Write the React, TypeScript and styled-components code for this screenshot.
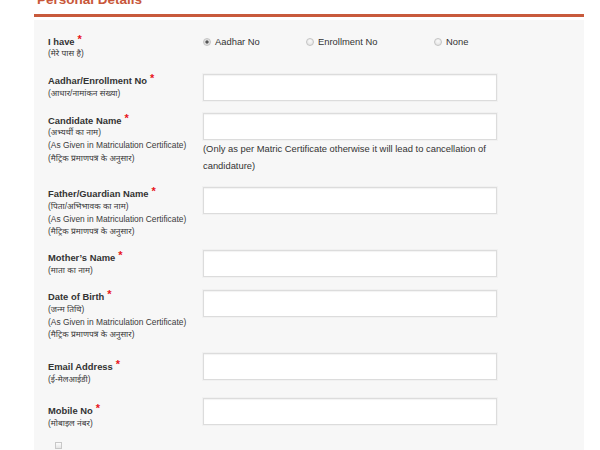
import React from "react";
import styled, { createGlobalStyle } from "styled-components";

const GlobalStyle = createGlobalStyle`
  html, body { margin: 0; padding: 0; background: #ffffff; }
  body {
    font-family: "Liberation Sans", Arial, "Noto Sans Devanagari", "Noto Sans", sans-serif;
    color: #333333;
    overflow: hidden;
  }
`;

const Page = styled.div`
  width: 550px;
  margin-left: 34px;
  height: 450px;
  overflow: hidden;
`;

const SectionTitle = styled.h3`
  margin: -8px 0 0 0;
  padding: 0 0 6px 3px;
  font-size: 13.5px;
  line-height: 16px;
  font-weight: bold;
  color: #c8573a;
  border-bottom: 3px solid #c85a3c;
`;

const Panel = styled.div`
  margin-top: 3px;
  background: #f7f7f7;
  padding: 14px 0 20px 14px;
  display: flex;
  flex-direction: column;
  gap: 12.4px;
  min-height: 440px;
`;

const Row = styled.div<{ $minHeight?: number }>`
  display: grid;
  grid-template-columns: 155px 1fr;
  align-items: start;
  min-height: ${(p) => (p.$minHeight ? `${p.$minHeight}px` : "0")};
`;

const LabelBlock = styled.div<{ $offset?: number }>`
  padding-top: ${(p) => p.$offset ?? 0.5}px;
  display: flex;
  flex-direction: column;
`;

const LabelMain = styled.span`
  display: block;
  height: 12.7px;
  font-size: 9.4px;
  font-weight: bold;
  line-height: 12.7px;
  color: #333333;
  white-space: nowrap;
`;

const Required = styled.span`
  color: #e8141b;
  font-size: 11px;
  font-weight: bold;
  position: relative;
  top: -2px;
  margin-left: 3px;
`;

const SubLabel = styled.span`
  display: block;
  height: 12.7px;
  font-size: 8.4px;
  line-height: 12.7px;
  color: #3a3a3a;
  white-space: nowrap;
`;

const Field = styled.div`
  display: flex;
  flex-direction: column;
`;

const TextInput = styled.input`
  width: 294px;
  height: 27px;
  box-sizing: border-box;
  margin: 0;
  border: 1px solid #dcdcdc;
  background: #ffffff;
  box-shadow: inset 0 1px 1px rgba(0, 0, 0, 0.05), 0 0 0 1px #f1f1f1;
  font-family: inherit;
  font-size: 9.4px;
  outline: none;
`;

const Note = styled.p`
  margin: 0 0 0 0;
  width: 294px;
  font-size: 9.4px;
  line-height: 17px;
  color: #333333;
`;

const RadioGroup = styled.div`
  display: flex;
  align-items: center;
  padding-top: 0.5px;
  height: 14px;
`;

const RadioOption = styled.label<{ $width?: number }>`
  display: flex;
  align-items: center;
  width: ${(p) => (p.$width ? `${p.$width}px` : "auto")};
  font-size: 9.4px;
  color: #333333;
`;

const Radio = styled.input`
  appearance: none;
  -webkit-appearance: none;
  width: 8px;
  height: 8px;
  margin: 0 4px 0 0;
  border-radius: 50%;
  border: 1px solid #c4c4c4;
  background: radial-gradient(circle at 50% 35%, #fafafa 0%, #dedede 100%);
  box-sizing: border-box;
  &:checked {
    background: radial-gradient(circle, #555 0%, #555 30%, #dcdcdc 45%, #e9e9e9 100%);
  }
`;

const CheckRow = styled.div`
  padding-left: 7px;
`;

const Check = styled.input`
  appearance: none;
  -webkit-appearance: none;
  width: 7px;
  height: 7px;
  margin: 0;
  border: 1px solid #c8c8c8;
  background: linear-gradient(#fcfcfc, #e6e6e6);
  box-sizing: border-box;
  display: block;
`;

type Entry = {
  label: string;
  subs: string[];
  offset?: number;
  note?: string;
};

const entries: Entry[] = [
  { label: "Aadhar/Enrollment No", subs: ["(आधार/नामांकन संख्या)"] },
  {
    label: "Candidate Name",
    subs: ["(अभ्यर्थी का नाम)", "(As Given in Matriculation Certificate)", "(मैट्रिक प्रमाणपत्र के अनुसार)"],
    note: "(Only as per Matric Certificate otherwise it will lead to cancellation of candidature)",
  },
  {
    label: "Father/Guardian Name",
    subs: ["(पिता/अभिभावक का नाम)", "(As Given in Matriculation Certificate)", "(मैट्रिक प्रमाणपत्र के अनुसार)"],
  },
  { label: "Mother’s Name", subs: ["(माता का नाम)"] },
  {
    label: "Date of Birth",
    subs: ["(जन्म तिथि)", "(As Given in Matriculation Certificate)", "(मैट्रिक प्रमाणपत्र के अनुसार)"],
  },
  { label: "Email Address", subs: ["(ई-मेलआईडी)"], offset: 6.5 },
  { label: "Mobile No", subs: ["(मोबाइल नंबर)"], offset: 6.5 },
];

export default function App() {
  return (
    <>
      <GlobalStyle />
      <Page>
        <SectionTitle>Personal Details</SectionTitle>
        <Panel>
          <Row $minHeight={27.5}>
            <LabelBlock>
              <LabelMain>
                I have<Required>*</Required>
              </LabelMain>
              <SubLabel>(मेरे पास है)</SubLabel>
            </LabelBlock>
            <RadioGroup>
              <RadioOption $width={103}>
                <Radio type="radio" name="idtype" defaultChecked />
                Aadhar No
              </RadioOption>
              <RadioOption $width={128}>
                <Radio type="radio" name="idtype" />
                Enrollment No
              </RadioOption>
              <RadioOption>
                <Radio type="radio" name="idtype" />
                None
              </RadioOption>
            </RadioGroup>
          </Row>
          {entries.map((e) => (
            <Row key={e.label}>
              <LabelBlock $offset={e.offset}>
                <LabelMain>
                  {e.label}
                  <Required>*</Required>
                </LabelMain>
                {e.subs.map((s, i) => (
                  <SubLabel key={i}>{s}</SubLabel>
                ))}
              </LabelBlock>
              <Field>
                <TextInput type="text" />
                {e.note && <Note>{e.note}</Note>}
              </Field>
            </Row>
          ))}
          <CheckRow>
            <Check type="checkbox" />
          </CheckRow>
        </Panel>
      </Page>
    </>
  );
}
